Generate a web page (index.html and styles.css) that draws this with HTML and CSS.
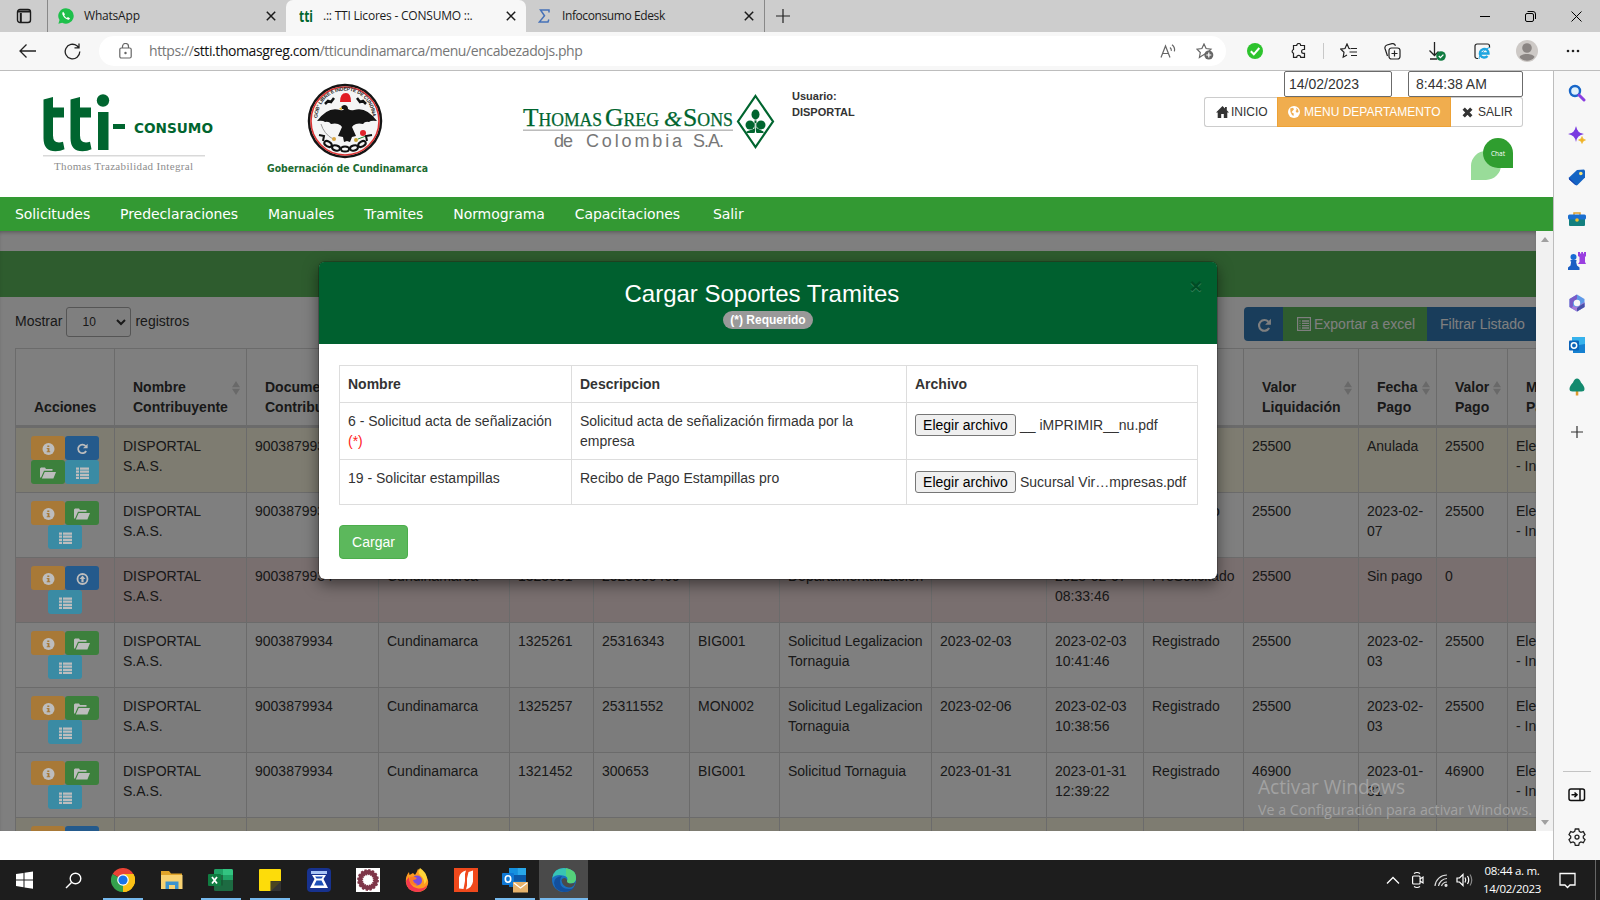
FILE: index.html
```html
<!DOCTYPE html>
<html lang="es">
<head>
<meta charset="utf-8">
<title>.:: TTI Licores - CONSUMO ::.</title>
<link rel="stylesheet" href="styles.css">
</head>
<body>
<svg class="defs" width="0" height="0">
  <symbol id="i-info" viewBox="0 0 12 12"><circle cx="6" cy="6" r="6" fill="#bdbdbd"/><path d="M4.8 2.4h2v1.5h-2zM4.2 4.9h2.7v3.3h.8v1.1H4.2V8.200h.9V5.900h-.9z" fill="#a87937"/></symbol>
  <symbol id="i-reload" viewBox="0 0 14 14"><path d="M11.300 9.300A5 5 0 1 1 10.600 3.500" fill="none" stroke="currentColor" stroke-width="2"/><path d="M13 .8v5.400H7.600z" fill="currentColor"/></symbol>
  <symbol id="i-folder" viewBox="0 0 16 12"><path d="M0 10.500V1.500L1 .5h4L6 2h6.500v1.800H4L1 10.500zM4.700 5H16l-2.600 6.500H1.800z" fill="currentColor"/></symbol>
  <symbol id="i-list" viewBox="0 0 13 12"><path d="M0 .5h3v2.200H0zM4 .5h9v2.200H4zM0 3.600h3v2.200H0zM4 3.600h9v2.200H4zM0 6.700h3v2.200H0zM4 6.700h9v2.200H4zM0 9.800h3V12H0zM4 9.800h9V12H4z" fill="currentColor"/></symbol>
  <symbol id="i-up" viewBox="0 0 12 12"><circle cx="6" cy="6" r="5" fill="none" stroke="currentColor" stroke-width="1.800"/><path d="M6 2.600 9 6H7.100v3.300H4.900V6H3z" fill="currentColor"/></symbol>
  <symbol id="i-sort" viewBox="0 0 8 14"><path d="M4 0l4 6.300H0zM4 14l4-6.300H0z" fill="#d2d2d2"/></symbol>
  <symbol id="i-x" viewBox="0 0 10 10"><path d="M.8.8l8.400 8.400M9.200.8.8 9.200" stroke="#1b1b1b" stroke-width="1.500"/></symbol>
</svg>

<div class="tabbar">
  <span class="tabmenu"><svg width="16" height="16" viewBox="0 0 16 16" fill="none" stroke="#1b1b1b" stroke-width="1.400"><rect x="1.500" y="1.500" width="13" height="13" rx="2.500"/><path d="M2 3.500h12M4.800 5v9" stroke-width="2"/></svg></span>
  <div class="tab tab-first">
    <svg width="16" height="16" viewBox="0 0 16 16"><path d="M8 .3A7.600 7.600 0 0 0 1.500 12L.4 15.700l3.800-1A7.700 7.700 0 1 0 8 .3z" fill="#1ec04b"/><path d="M5.200 3.800c-1 .6-1.200 2-.4 3.500 1 2 2.600 3.600 4.600 4.300 1.300.4 2.300-.2 2.500-1.400l-2-1.200-1 .9C7.600 9.300 6.700 8.300 6.200 7.200L7 6.300z" fill="#fff"/></svg>
    <span class="tab-t t1">WhatsApp</span><svg class="tx" width="10" height="10"><use href="#i-x"/></svg>
  </div>
  <div class="tab tab-active">
    <svg width="15" height="16" viewBox="0 0 15 16"><text x="0" y="14" class="fav" textLength="14" lengthAdjust="spacingAndGlyphs">tti</text></svg>
    <span class="tab-t t2">.:: TTI Licores - CONSUMO ::.</span><svg class="tx" width="10" height="10"><use href="#i-x"/></svg>
  </div>
  <div class="tab tab-last">
    <svg width="12" height="14" viewBox="0 0 12 14"><path d="M11 3.500V1H2.500l4 5.800L1.300 13H10l.8-2.500" fill="none" stroke="#4672b8" stroke-width="1.500"/></svg>
    <span class="tab-t t3">Infoconsumo Edesk</span><svg class="tx" width="10" height="10"><use href="#i-x"/></svg>
  </div>
  <span class="newtab"><svg width="14" height="14" stroke="#222" stroke-width="1.200"><path d="M7 0v14M0 7h14"/></svg></span>
  <div class="winbtns">
    <svg width="10" height="12"><path d="M0 6.500h10" stroke="#000"/></svg>
    <svg width="11" height="11" viewBox="0 0 11 11" fill="none" stroke="#000"><rect x=".5" y="2.500" width="8" height="8" rx="1.500"/><path d="M2.500.5H8A2.500 2.500 0 0 1 10.500 3v5"/></svg>
    <svg width="11" height="11"><path d="M.5.5l10 10M10.500.5l-10 10" stroke="#000"/></svg>
  </div>
</div>

<div class="toolbar">
  <svg class="back" width="17" height="14" viewBox="0 0 17 14" fill="none" stroke="#222" stroke-width="1.300"><path d="M17 7H1M7.500.5 1 7l6.500 6.500"/></svg>
  <svg class="rel" width="17" height="17" viewBox="0 0 17 17" fill="none" stroke="#222" stroke-width="1.300"><path d="M15.800 8.500A7.300 7.300 0 1 1 13 2.800L14.800 4.800M15 .5v4.400h-4.500"/></svg>
  <div class="omni">
    <svg width="13" height="16" viewBox="0 0 13 16" fill="none" stroke="#666" stroke-width="1.200"><rect x=".8" y="5" width="11.400" height="10" rx="1.500"/><path d="M3.500 5V3.500a3 3 0 0 1 6 0V5"/><circle cx="6.500" cy="10" r=".6" fill="#666"/></svg>
    <span class="url">https://<b>stti.thomasgreg.com</b>/tticundinamarca/menu/encabezadojs.php</span>
    <svg class="read" width="17" height="14" viewBox="0 0 17 14" fill="none" stroke="#666" stroke-width="1.200"><path d="M1 13.500 5.500 2 10 13.500M2.700 9.500h5.700M10 3.500c1 .8 1.500 2 1.300 3.300M12 .8c2 1.500 3 4 2.400 6.600"/></svg>
    <svg class="fav-add" width="18" height="17" viewBox="0 0 18 17"><path d="M8 1l2.100 4.500 4.900.7-3.500 3.400L6 12.800 3.400 14.500l.9-5L1 6.200l4.900-.7z" fill="none" stroke="#666" stroke-width="1.200"/><circle cx="12.800" cy="12" r="4.500" fill="#666"/><path d="M12.800 9.500v5M10.300 12h5" stroke="#fff" stroke-width="1.200"/></svg>
  </div>
  <div class="tools">
    <svg width="16" height="16" viewBox="0 0 16 16"><circle cx="8" cy="8" r="8" fill="#2dc32d"/><path d="M3.800 8.300l3 3L12.300 5" fill="none" stroke="#fff" stroke-width="2"/></svg>
    <svg width="16" height="16" viewBox="0 0 16 16"><path d="M2.500 2.500h3.200a2 2 0 0 1 4 0h3.800v4h-1a1.900 1.900 0 0 0 0 3.800h1v4H9.700a2 2 0 0 0-4 0H2.500v-4a2 2 0 0 1 0-3.800z" fill="none" stroke="#222" stroke-width="1.200"/></svg>
    <i class="vsep"></i>
    <svg width="17" height="16" viewBox="0 0 17 16" fill="none" stroke="#222" stroke-width="1.200"><path d="M10.500 5.600 9 5.500 7 1 5 5.500.8 6.100 4 9.300l-.8 4.900L7 12M11 5.500h6M9.500 9h7.500M11 12.500h6"/></svg>
    <svg width="17" height="17" viewBox="0 0 17 17" fill="none" stroke="#222" stroke-width="1.200"><rect x="5" y="5" width="11" height="11" rx="2.500"/><path d="M10.500 7.500v6M7.500 10.500h6M3.500 13 1 5.500A3 3 0 0 1 3 2l5-1.300a3 3 0 0 1 3.500 2"/></svg>
    <svg width="18" height="19" viewBox="0 0 18 19" fill="none" stroke="#222" stroke-width="1.300"><path d="M6.500 0v13M1.500 8.500l5 5 4-4M2 17h7"/><circle cx="13" cy="14" r="4.800" fill="#107c41" stroke="none"/><path d="M10.800 14l1.600 1.600 3-3" stroke="#fff"/></svg>
    <svg width="17" height="17" viewBox="0 0 17 17"><path d="M4 15.500H3A2 2 0 0 1 1 13.500V3a2 2 0 0 1 2-2h10.500a2 2 0 0 1 2 2v2" fill="none" stroke="#222" stroke-width="1.200"/><path d="M6 10.500h8.500A4.300 4.300 0 1 0 13.500 13" fill="none" stroke="#1ea5e0" stroke-width="2.400"/><path d="M5 16C5 12 11 5.500 16 4.500" fill="none" stroke="#1ea5e0"/></svg>
    <svg width="22" height="22" viewBox="0 0 22 22"><circle cx="11" cy="11" r="11" fill="#cdc9c6"/><circle cx="11" cy="8" r="4.800" fill="#8a8583"/><path d="M3.500 17c1.500-4 13.500-4 15 0-3 5-12 5-15 0z" fill="#8a8583"/></svg>
    <svg width="14" height="4" fill="#222"><circle cx="2" cy="2" r="1.300"/><circle cx="7" cy="2" r="1.300"/><circle cx="12" cy="2" r="1.300"/></svg>
  </div>
</div>

<div class="main">
  <div class="page">
    <header class="head">
      <svg class="logo-tti" width="180" height="90" viewBox="0 0 180 90">
        <g fill="#00652f"><path d="M1.500 14.500 11 12v10.500h11v10H11v18q0 7 6 7 2 0 4-.7l1.500 7.500q-4 2-9 2-12 0-12-13zM28.500 14.500 38 12v10.500h11v10H38v18q0 7 6 7 2 0 4-.7l1.500 7.500q-4 2-9 2-12 0-12-13z"/><rect x="56" y="27" width="10.500" height="38"/><circle cx="61" cy="15.500" r="6.200"/><rect x="71" y="39" width="12" height="5"/></g>
        <text x="92" y="47.500" class="consumo" textLength="79" lengthAdjust="spacingAndGlyphs">CONSUMO</text>
        <rect x="1" y="70" width="162" height="1.500" fill="#d9d9d9"/>
        <text x="12" y="84.500" class="thomas" textLength="139">Thomas Trazabilidad Integral</text>
      </svg>
      <svg class="crest" width="164" height="96" viewBox="0 0 164 96">
        <circle cx="79" cy="39" r="36" fill="#f5f5f5" stroke="#151515" stroke-width="2.500"/>
        <circle cx="79" cy="39" r="34" fill="none" stroke="#d33" stroke-width="1.600"/>
        <path id="arc" d="M51.500 36A27.500 27.500 0 0 1 106.500 36" fill="none"/>
        <text class="motto"><textPath href="#arc" textLength="85">GOB° LIBRE E INDEPTE DE CUNDINA</textPath></text>
        <path d="M74 20q0-9 6-9 5 0 5 9z" fill="#e11c24"/>
        <g fill="none" stroke="#111" stroke-width="2.500"><path d="M59 22l3-3 3 1 3-4M100 22l-3-3-3 1-3-4"/></g>
        <path d="M76 27q-2-3 2-4 4 0 4 4 3 2 6 1 12-4 23 11-6-1-8 1-4-1-6 2-4-1-7 0-3 1-4 3l4 9-4 1-2 5-3-1-3 1-1-5-5-1 4-9q-1-2-4-3-3-1-7 0-2-3-6-2-2-2-8-1 11-15 23-11 3 1 4-1z" fill="#141414"/>
        <path d="M75.500 25l-2.500 2 3 1z" fill="#e8b21a"/>
        <path d="M55 42q3 10 12 15" fill="none" stroke="#999"/><circle cx="68" cy="57" r="2" fill="#d9a441"/><circle cx="90" cy="58" r="2" fill="#c9a83a"/><circle cx="97" cy="51" r="3" fill="#e0252c"/><path d="M92 57l8-3" stroke="#2b8a3a"/>
        <g fill="none" stroke="#111" stroke-width="2"><path d="M53 53l5 1-1 5M106 53l-6 1 1 5"/><ellipse cx="62" cy="62" rx="4" ry="2.500" transform="rotate(30 62 62)"/><ellipse cx="70" cy="66" rx="4" ry="2.500" transform="rotate(15 70 66)"/><ellipse cx="79" cy="67" rx="4" ry="2.500"/><ellipse cx="88" cy="66" rx="4" ry="2.500" transform="rotate(-15 88 66)"/><ellipse cx="96" cy="62" rx="4" ry="2.500" transform="rotate(-30 96 62)"/></g>
        <text x="1" y="90" class="gob" textLength="161" lengthAdjust="spacingAndGlyphs">Gobernación de Cundinamarca</text>
      </svg>
      <svg class="logo-tgs" width="256" height="60" viewBox="0 0 256 60">
        <g class="tgs"><text x="1" y="33" textLength="79" lengthAdjust="spacingAndGlyphs"><tspan class="cap">T</tspan>HOMAS</text>
        <text x="83" y="33" textLength="54" lengthAdjust="spacingAndGlyphs"><tspan class="cap">G</tspan>REG</text>
        <text x="142" y="33" class="amp" textLength="18" lengthAdjust="spacingAndGlyphs">&amp;</text>
        <text x="161" y="33" textLength="50" lengthAdjust="spacingAndGlyphs"><tspan class="cap">S</tspan>ONS</text></g>
        <rect x="1" y="36.500" width="210" height="1.400" fill="#b5b5b5"/>
        <g class="dec"><text x="32" y="54" textLength="19">de</text><text x="64" y="54" textLength="96">Colombia</text><text x="171" y="54" textLength="31">S.A.</text></g>
        <path d="M233.500 3 251 28.500 233.500 54 216 28.500z" fill="#fff" stroke="#00652f" stroke-width="2.200"/>
        <g fill="#00652f"><ellipse cx="233.500" cy="21.500" rx="4" ry="5"/><circle cx="228" cy="32" r="4.500"/><circle cx="239" cy="32" r="4.500"/><path d="M232.500 25h2v10l7 3.500v1.500h-7l-1-3-1 3h-8v-1.500l8-3z"/></g>
        <path d="M231 27h5M233.500 30v9" stroke="#fff" stroke-width=".8"/>
      </svg>
      <div class="user">Usuario:<br>DISPORTAL</div>
      <div class="session">
        <div class="inputs"><span class="inp d">14/02/2023</span><span class="inp h">8:44:38 AM</span></div>
        <div class="bgroup">
          <span class="bg b1"><svg width="13" height="12" viewBox="0 0 13 12"><path d="M6.500 0 0 6.500h1.700V12h3.500V8h2.600v4h3.500V6.500H13L10.800 4.300V1H9v1.500z" fill="#333"/></svg>INICIO</span>
          <span class="bg b2"><svg width="12" height="12" viewBox="0 0 12 12"><circle cx="6" cy="6" r="6" fill="#fff"/><path d="M2.200 2.500l2.800-.7 1 1.500L4.500 5 3.500 6.300 5.800 7.500 5.500 10 4 9 2.500 6zM8 1.800l2 1.700.6 2.500-1.800.8L7.500 5l1.200-1z" fill="#f0ad4e"/></svg>MENU DEPARTAMENTO</span>
          <span class="bg b3"><svg width="11" height="11" viewBox="0 0 11 11"><path d="M1.700 1.700l7.600 7.600M9.300 1.700 1.700 9.300" stroke="#333" stroke-width="3.300"/></svg>SALIR</span>
        </div>
        <svg class="chat" width="42" height="42" viewBox="0 0 42 42"><path d="M0 42V27.500A15 15 0 0 1 15 13h15v14A15 15 0 0 1 15 42z" fill="#99dc99"/><path d="M42 30V15A15 15 0 1 0 27 30z" fill="#2f9e2f"/><text x="27" y="17.500" class="chat-t" text-anchor="middle">Chat</text></svg>
      </div>
    </header>
    <nav class="nav"><a>Solicitudes</a><a>Predeclaraciones</a><a>Manuales</a><a>Tramites</a><a>Normograma</a><a>Capacitaciones</a><a>Salir</a></nav>

    <div class="frame">
      <div class="view">
        <div class="band"></div>
        <div class="controls">
          <div class="len">Mostrar <span class="sel">10<svg width="10" height="7" viewBox="0 0 10 7"><path d="M1 1l4 4 4-4" fill="none" stroke="#333" stroke-width="2"/></svg></span> registros</div>
          <div class="acts"><span class="ab ab1"><svg width="15" height="15"><use href="#i-reload"/></svg></span><span class="ab ab2"><svg width="14" height="14" viewBox="0 0 14 14" fill="none" stroke="#fff"><rect x=".6" y=".6" width="12.800" height="12.800" stroke-width="1.200"/><path d="M2.500 4h1M5 4h7M2.500 6.300h1M5 6.300h7M2.500 8.600h1M5 8.600h7M2.500 11h1M5 11h7" stroke-width="1.300"/></svg>Exportar a excel</span><span class="ab ab3">Filtrar Listado</span></div>
        </div>
        <table class="grid">
          <colgroup><col class="c1"><col class="c2"><col class="c3"><col class="c4"><col class="c5"><col class="c6"><col class="c7"><col class="c8"><col class="c9"><col class="c10"><col class="c11"><col class="c12"><col class="c13"><col class="c14"><col class="c15"></colgroup>
          <thead><tr>
            <th>Acciones</th><th>Nombre<br>Contribuyente<svg class="so"><use href="#i-sort"/></svg></th><th>Documento<br>Contribuyente</th><th></th><th></th><th></th><th></th><th></th><th></th><th></th><th></th>
            <th>Valor<br>Liquidación<svg class="so"><use href="#i-sort"/></svg></th><th>Fecha<br>Pago<svg class="so"><use href="#i-sort"/></svg></th><th>Valor<br>Pago<svg class="so"><use href="#i-sort"/></svg></th><th>Medio<br>Pago</th>
          </tr></thead>
          <tbody>
          <tr class="warn"><td><div class="btns"><i class="o"><svg><use href="#i-info"/></svg></i><i class="b"><svg><use href="#i-reload"/></svg></i><i class="g"><svg><use href="#i-folder"/></svg></i><i class="c"><svg><use href="#i-list"/></svg></i></div></td><td>DISPORTAL S.A.S.</td><td>9003879934</td><td></td><td></td><td></td><td></td><td></td><td></td><td></td><td></td><td>25500</td><td>Anulada</td><td>25500</td><td>Electronico<br>- Internet</td></tr>
          <tr><td><div class="btns"><i class="o"><svg><use href="#i-info"/></svg></i><i class="g"><svg><use href="#i-folder"/></svg></i><i class="c"><svg><use href="#i-list"/></svg></i></div></td><td>DISPORTAL S.A.S.</td><td>9003879934</td><td></td><td></td><td></td><td></td><td></td><td></td><td></td><td class="pend">Registrado</td><td>25500</td><td>2023-02-07</td><td>25500</td><td>Electronico<br>- Internet</td></tr>
          <tr class="dang"><td><div class="btns"><i class="o"><svg><use href="#i-info"/></svg></i><i class="b"><svg><use href="#i-up"/></svg></i><i class="c"><svg><use href="#i-list"/></svg></i></div></td><td>DISPORTAL S.A.S.</td><td>9003879934</td><td>Cundinamarca</td><td>1325351</td><td>2023000469</td><td></td><td>Departamentalizacion</td><td></td><td>2023-02-07 08:33:46</td><td>PreSolicitado</td><td>25500</td><td>Sin pago</td><td>0</td><td></td></tr>
          <tr><td><div class="btns"><i class="o"><svg><use href="#i-info"/></svg></i><i class="g"><svg><use href="#i-folder"/></svg></i><i class="c"><svg><use href="#i-list"/></svg></i></div></td><td>DISPORTAL S.A.S.</td><td>9003879934</td><td>Cundinamarca</td><td>1325261</td><td>25316343</td><td>BIG001</td><td>Solicitud Legalizacion Tornaguia</td><td>2023-02-03</td><td>2023-02-03 10:41:46</td><td>Registrado</td><td>25500</td><td>2023-02-03</td><td>25500</td><td>Electronico<br>- Internet</td></tr>
          <tr class="odd"><td><div class="btns"><i class="o"><svg><use href="#i-info"/></svg></i><i class="g"><svg><use href="#i-folder"/></svg></i><i class="c"><svg><use href="#i-list"/></svg></i></div></td><td>DISPORTAL S.A.S.</td><td>9003879934</td><td>Cundinamarca</td><td>1325257</td><td>25311552</td><td>MON002</td><td>Solicitud Legalizacion Tornaguia</td><td>2023-02-06</td><td>2023-02-03 10:38:56</td><td>Registrado</td><td>25500</td><td>2023-02-03</td><td>25500</td><td>Electronico<br>- Internet</td></tr>
          <tr><td><div class="btns"><i class="o"><svg><use href="#i-info"/></svg></i><i class="g"><svg><use href="#i-folder"/></svg></i><i class="c"><svg><use href="#i-list"/></svg></i></div></td><td>DISPORTAL S.A.S.</td><td>9003879934</td><td>Cundinamarca</td><td>1321452</td><td>300653</td><td>BIG001</td><td>Solicitud Tornaguia</td><td>2023-01-31</td><td>2023-01-31 12:39:22</td><td>Registrado</td><td>46900</td><td>2023-01-31</td><td>46900</td><td>Electronico<br>- Internet</td></tr>
          <tr class="warn"><td><div class="btns"><i class="o"></i><i class="b"></i></div></td><td></td><td></td><td></td><td></td><td></td><td></td><td></td><td></td><td></td><td></td><td></td><td></td><td></td><td></td></tr>
          </tbody>
        </table>
        <div class="backdrop"></div>
        <div class="watermark"><svg width="290" height="48"><text x="2" y="19" class="w1" textLength="147" lengthAdjust="spacingAndGlyphs">Activar Windows</text><text x="2" y="40" class="w2" textLength="274" lengthAdjust="spacingAndGlyphs">Ve a Configuración para activar Windows.</text></svg></div>
        <div class="modal">
          <div class="mhead"><span class="close">×</span><h4>Cargar Soportes Tramites</h4><span class="badge">(*) Requerido</span></div>
          <div class="mbody">
            <table class="mt">
              <colgroup><col class="m1"><col class="m2"><col class="m3"></colgroup>
              <tr><th>Nombre</th><th>Descripcion</th><th>Archivo</th></tr>
              <tr><td>6 - Solicitud acta de señalización <span class="req">(*)</span></td><td>Solicitud acta de señalización firmada por la empresa</td><td><div class="file"><button>Elegir archivo</button><span>__ iMPRIMIR__nu.pdf</span></div></td></tr>
              <tr><td>19 - Solicitar estampillas</td><td>Recibo de Pago Estampillas pro</td><td><div class="file"><button>Elegir archivo</button><span>Sucursal Vir…mpresas.pdf</span></div></td></tr>
            </table>
            <span class="cargar">Cargar</span>
          </div>
        </div>
      </div>
      <div class="scroll"><svg width="8" height="5"><path d="M0 5 4 0l4 5z" fill="#a0a0a0"/></svg><svg width="8" height="5"><path d="M0 0l4 5 4-5z" fill="#a0a0a0"/></svg></div>
    </div>
  </div>

  <aside class="side">
    <svg viewBox="0 0 18 18"><circle cx="7" cy="7" r="5" fill="#dff1fb" stroke="#1766c9" stroke-width="2.400"/><path d="M11 11l5 5" stroke="#8a3fe0" stroke-width="3" stroke-linecap="round"/></svg>
    <svg viewBox="0 0 18 18"><path d="M8 0q1 7 8 8-7 1-8 8-1-7-8-8 7-1 8-8z" fill="#7a3be0"/><path d="M8 1q.6 6.400 7 7l-7 .5L1 8q6.400-.6 7-7z" fill="#7a3be0"/><path d="M14 10.500q.5 3 3.500 3.500-3 .5-3.500 3.500-.5-3-3.500-3.500 3-.5 3.500-3.500z" fill="#f0b323" stroke="#f0b323" stroke-width=".6"/></svg>
    <svg viewBox="0 0 18 18"><path d="M1 9.500 9 2l7-.5 1 1v7L9.500 17q-1 .8-2 0L1.200 11.500q-.8-1-.2-2z" fill="#1464c4"/><path d="M1 9.500 8 16.800q-.3.300-1 0L1.200 11.500z" fill="#1a3fae"/><circle cx="12.800" cy="5.500" r="1.800" fill="#f6e27a"/></svg>
    <svg viewBox="0 0 18 18"><path d="M6 5V3h6v2" fill="none" stroke="#e0a02c" stroke-width="1.500"/><rect x="1" y="8" width="16" height="8" rx="1" fill="#13807f"/><rect x="0" y="4.500" width="18" height="5" rx="1.500" fill="#1b6fd0"/><circle cx="9" cy="10" r="1.800" fill="#f2c230"/></svg>
    <svg viewBox="0 0 18 18"><path d="M10 0h2v1.500h1.200V0h1.800v1.500h1V0h2v4l-1 1v5l1 2h-8l1.500-2V5L10 4z" fill="#9a3fe0"/><circle cx="5.500" cy="5" r="3" fill="#1a6bd4"/><path d="M2.500 8h6v1.500H8l1 4 2.500 2V18H0v-2.500l2.500-2 .7-4h-.7z" fill="#1a5fc4"/></svg>
    <svg viewBox="0 0 18 18"><path d="M9 .5 16.500 5v8L9 17.500 1.500 13V5z" fill="#5f9ae8"/><path d="M9 .5 1.500 5v8L5 15V8l4-3z" fill="#7a5bc8"/><path d="M16.500 8v5L9 17.500 3.500 14.300 5 12l4 1z" fill="#a77bd8"/><path d="M16.500 9v4L9 17.500V14l4-3z" fill="#4651a8"/><circle cx="9" cy="9" r="3.200" fill="#f7f7f7"/></svg>
    <svg viewBox="0 0 18 18"><rect x="4" y="1" width="13" height="13" fill="#36b2ec"/><path d="M5 10l12-2v9H5z" fill="#1580d0"/><rect x="1" y="4.500" width="10" height="10" rx="1" fill="#0b62b8"/><circle cx="6" cy="9.500" r="2.700" fill="none" stroke="#fff" stroke-width="1.500"/></svg>
    <svg viewBox="0 0 18 18"><rect x="7.800" y="11" width="2.500" height="6.500" fill="#e09a2c"/><path d="M9 .5q2.500 0 4 4 3.500 3.500 3.500 6.500 0 2.500-3 2.500h-9q-3 0-3-2.500 0-3 3.500-6.500 1.500-4 4-4z" fill="#138a6e"/></svg>
    <svg class="pl" viewBox="0 0 18 18"><path d="M9 3v12M3 9h12" stroke="#333" stroke-width="1.200"/></svg>
    <i class="fill"></i><i class="hr"></i>
    <svg class="s10" viewBox="0 0 18 18" fill="none" stroke="#111" stroke-width="1.500"><rect x="1" y="3" width="15.500" height="11.500" rx="2"/><path d="M12 3v11.500M3.500 8.800h5M6.500 6.500 9 8.800l-2.500 2.300"/></svg>
    <svg class="s11" viewBox="0 0 18 18" fill="none" stroke="#222" stroke-width="1.300"><path d="M7.300 1h3.400l.6 2.400 1.600.9 2.400-.7 1.700 3L15.300 8.300v1.700l1.700 1.700-1.700 3-2.400-.7-1.600.9-.6 2.400H7.300l-.6-2.400-1.600-.9-2.400.7-1.700-3 1.700-1.700V8.300L1 6.600l1.700-3 2.400.7 1.600-.9z"/><circle cx="9" cy="9.100" r="2"/></svg>
  </aside>
</div>

<footer class="task">
  <span class="ti"><svg width="17" height="18" viewBox="0 0 17 18" fill="#fff"><path d="M0 3l7.500-1v6.600H0zM8.500 1.800 17 .5v8.100H8.500zM0 9.600h7.500v6.600L0 15zM8.500 9.600H17v8.100l-8.500-1.200z"/></svg></span>
  <span class="ti"><svg width="17" height="17" viewBox="0 0 17 17" fill="none" stroke="#fff" stroke-width="1.400"><circle cx="10.500" cy="6.500" r="5.300"/><path d="M6.500 10.500 1 16"/></svg></span>
  <span class="ti run"><svg width="24" height="24" viewBox="0 0 24 24"><path d="M12 12 1.600 6A12 12 0 0 1 22.400 6z" fill="#ea4335"/><path d="M12 12 22.400 6A12 12 0 0 1 12 24z" fill="#fbc116"/><path d="M12 12v12A12 12 0 0 1 1.600 6z" fill="#34a14c"/><path d="M12 6h10.400A12 12 0 0 1 12 24l5.200-9z" fill="#fbc116"/><circle cx="12" cy="12" r="5.800" fill="#fff"/><circle cx="12" cy="12" r="4.600" fill="#1a73e8"/></svg></span>
  <span class="ti"><svg width="22" height="18" viewBox="0 0 22 18"><path d="M0 0h8l2 2.500h11V17H0z" fill="#e0a42a"/><path d="M0 4h21.500v14H0z" fill="#f8d272"/><path d="M4.500 18v-7.500h13V18H14v-4H8v4z" fill="#3c94cf"/></svg></span>
  <span class="ti run"><svg width="25" height="22" viewBox="0 0 25 22"><rect x="6" width="19" height="22" rx="1.500" fill="#1d6b42"/><path d="M6 1.500Q6 0 7.500 0H15v6H6z" fill="#21a366"/><path d="M15 0h8.500Q25 0 25 1.500V6H15z" fill="#33c481"/><path d="M6 11h9v5.500H6z" fill="#185c37"/><path d="M15 6h10v5H15z" fill="#21a366"/><rect y="5" width="13" height="12" rx="1" fill="#107c41"/><path d="M4 8l5 6.500M9 8l-5 6.500" stroke="#fff" stroke-width="1.800"/></svg></span>
  <span class="ti run"><svg width="22" height="22" viewBox="0 0 22 22"><path d="M1 0h20q1 0 1 1v11l-10 10H1q-1 0-1-1V1q0-1 1-1z" fill="#fddc0a"/><path d="M11.500 12H22v9q0 1-1 1h-9.500z" fill="#333"/><path d="M12 22v-9.500h10z" fill="#4b4520"/></svg></span>
  <span class="ti"><svg width="24" height="24" viewBox="0 0 24 24"><rect width="24" height="24" rx="4" fill="#17328f"/><path d="M4 3h16v3H4z" fill="#a9c5f5"/><path d="M5 7h14l-2.500 4L21 20H3l4.500-9z" fill="#fff"/><path d="M8 8.500h8l-1.500 2h-5zM9.500 12.500h5L17 17.500H7z" fill="#1c50b8"/></svg></span>
  <span class="ti"><svg width="24" height="24" viewBox="0 0 24 24"><rect width="24" height="24" fill="#fff"/><circle cx="12" cy="12" r="7.900" fill="none" stroke="#7e3548" stroke-width="6" stroke-dasharray="1.800 1.300"/><circle cx="12" cy="12" r="7.900" fill="none" stroke="#7e3548" stroke-width="4.200"/></svg></span>
  <span class="ti"><svg width="24" height="24" viewBox="0 0 24 24"><path d="M13 1q4 2 5.500 6l1.500-1q4 6 3 10-2 8-11 8Q2 23 .8 14 .5 8 4 4l.5 3L8 5l2 2q2-3 3-6z" fill="#ff9a1f"/><path d="M15 0q-3 4 0 7 5 4 4 9 3-2 3-6-1-6-7-10z" fill="#ffd43a"/><path d="M1 13q0 10 11 11 8 0 10.500-7-5 5-11 3Q4 18 4 9z" fill="#f4384f"/><circle cx="12" cy="12.500" r="5" fill="#7a4be0"/><path d="M5 9q4-1 7 1-1 2-4 2 1 4 5 4-5 3-8-2z" fill="#ff7a26"/></svg></span>
  <span class="ti"><svg width="24" height="24" viewBox="0 0 24 24"><rect width="24" height="24" fill="#f0491c"/><path d="M5 9.500Q6 4 12 2.500L11 6v7l-1.500 8L5 20.500zM19 13.500q-1 6-7 8l1-4v-7L14.500 4 19 2.500z" fill="#fff"/></svg></span>
  <span class="ti run"><svg width="26" height="26" viewBox="0 0 26 26"><path d="M7 1h17v19H7z" fill="#0f6cbd"/><path d="M7 1h8.500v7H7z" fill="#1490df"/><path d="M15.500 1H24v7h-8.500z" fill="#28a8ea"/><path d="M7 8h17v6H7z" fill="#0a58a8"/><rect y="6" width="12" height="12" rx="1" fill="#0f78d4"/><ellipse cx="6" cy="12" rx="2.700" ry="3.200" fill="none" stroke="#fff" stroke-width="1.600"/><rect x="11" y="15" width="15" height="10.500" fill="#e8b36c"/><path d="M12 16l6.500 5 6.500-5" fill="none" stroke="#fff" stroke-width="1.300"/></svg></span>
  <span class="ti run cur"><svg width="24" height="24" viewBox="0 0 24 24"><circle cx="12" cy="12" r="12" fill="#1b6fc0"/><path d="M.3 10Q2 0 12 0q12 1 12 10 0 5-5.500 5.500-4 0-3.500-2 2-5-4-6Q4 6 .3 10z" fill="#38c4b4"/><path d="M14 0q10 2 10 10 0 5-5.500 5.500-4 0-3.500-2 2-4-1-5.500z" fill="#55d27a"/><path d="M8 13q0 8 9 8 3 0 5-1-4 4-10 4Q3 23 2 15q0-6 8-7-2 2-2 5z" fill="#134f9c"/><path d="M9.500 12q1-2 3-2 3 1 2.500 3.500.5 2 4.500 2 2 0 3.500-1-1 5-6 5-7-1-7.500-7.500z" fill="#4a4a4a"/></svg></span>
  <div class="tray">
    <svg class="y1" width="14" height="8" viewBox="0 0 14 8"><path d="M1 7.500 7 1.500l6 6" fill="none" stroke="#fff" stroke-width="1.300"/></svg>
    <svg class="y2" width="14" height="18" viewBox="0 0 14 18" fill="none" stroke="#fff" stroke-width="1.200"><rect x="1.600" y="5" width="7.500" height="8" rx="1"/><path d="M9 8l3-2v6l-3-2M3 2.500Q6 .5 9 2.500M3 15.500q3 2 6 0"/></svg>
    <svg class="y3" width="14" height="14" viewBox="0 0 14 14" fill="none" stroke="#ddd" stroke-width="1.200"><path d="M1 13A12 12 0 0 1 13 2M4.500 13A9 9 0 0 1 13 5.500M7.500 13A6 6 0 0 1 13 9"/><circle cx="12" cy="12.300" r="1" fill="#fff"/></svg>
    <svg class="y4" width="17" height="14" viewBox="0 0 17 14" fill="none" stroke="#fff" stroke-width="1.200"><path d="M1 5h2.500L7 1.500v11L3.500 9H1zM9 4.500q1.500 2.500 0 5M11.500 3q2.500 4 0 8"/><path d="M14 1.500q3.500 5.500 0 11" stroke="#888"/></svg>
    <div class="clock">08:44 a. m.<br>14/02/2023</div>
    <svg class="y5" width="17" height="17" viewBox="0 0 17 17"><path d="M1 1.500h15v11.500h-5L8.500 15.500 6 13H1z" fill="none" stroke="#fff" stroke-width="1.300"/></svg>
    <i class="desk"></i>
  </div>
</footer>
</body>
</html>
```
FILE: styles.css
```css
*{box-sizing:border-box}
body{margin:0;width:1600px;height:900px;overflow:hidden;background:#fff;font-family:"Liberation Sans",Arial,sans-serif;font-size:14px;line-height:20px;color:#333;display:flex;flex-direction:column}
svg{display:block;flex:none}
.defs{position:absolute}

/* browser chrome */
.tabbar{height:32px;flex:none;background:#cdcdcd;display:flex;align-items:stretch;font:12px/32px "Open Sans","Noto Sans",sans-serif;color:#1b1b1b}
.tabmenu{width:48px;padding:8px 0 0 16px;border-right:1px solid #888}
.tab{display:flex;align-items:center;white-space:nowrap}
.tab-first{width:238px;padding-left:10px}
.tab-active{width:240px;padding-left:13px;background:#f7f7f7;border-radius:7px 7px 0 0}
.tab-last{width:239px;padding-left:12px;border-right:1px solid #888}
.tab-t{flex:1}
.t1{padding-left:10px;letter-spacing:-.2px}
.t2{padding-left:9px;letter-spacing:-.22px}
.t3{padding-left:12px;letter-spacing:-.4px}
.tx{margin-right:10px}
.fav{font:bold 16px "Open Sans",sans-serif;fill:#00652f}
.newtab{padding:9px 0 0 11px}
.winbtns{margin-left:auto;display:flex;gap:35px;align-items:center;padding-right:18px}
.toolbar{height:39px;flex:none;background:#f7f7f7;border-bottom:1px solid #bdbdbd;display:flex;align-items:center}
.back{margin-left:19px}
.rel{margin-left:28px}
.omni{margin-left:18px;width:1127px;height:30px;background:#fff;border-radius:15px;display:flex;align-items:center;padding-left:20px}
.url{margin-left:17px;flex:1;font:14px/30px "Open Sans","Noto Sans",sans-serif;letter-spacing:-.41px;color:#767676;white-space:nowrap}
.url b{font-weight:normal;color:#111}
.read{margin-right:19px}
.fav-add{margin-right:12px}
.tools{flex:1;display:grid;grid-template-columns:44px 44px 5px 44px 44px 46px 44px 46px 46px;align-items:center;justify-items:center;padding-left:7px}
.vsep{width:1px;height:16px;background:#c8c8c8}

.main{height:789px;flex:none;display:flex}
.page{width:1554px;border-right:1px solid #bdbdbd;display:flex;flex-direction:column}
.side{flex:1;background:#f7f7f7;display:flex;flex-direction:column;align-items:center;padding-top:13px;gap:24px}
.side svg{width:18px;height:18px}
.side .pl{margin-top:3px}
.side .fill{flex:1;margin-bottom:-48px}
.side .hr{width:28px;height:1px;background:#c4c4c4;margin-bottom:-10px}
.side .s11{margin-bottom:14px}

/* application header */
.head{height:126px;flex:none;display:flex;align-items:flex-start}
.logo-tti{margin:14px 0 0 42px}
.consumo{font:bold 14px "DejaVu Sans",Verdana,sans-serif;fill:#00652f}
.thomas{font:11px "Liberation Serif",serif;fill:#8c8c8c}
.crest{margin:11px 0 0 44px}
.motto{font:bold 5px "Liberation Sans",sans-serif;fill:#222}
.gob{font:bold 10.500px "DejaVu Sans",Verdana,sans-serif;fill:#1c6b31}
.logo-tgs{margin:22px 0 0 92px}
.tgs{font:18px "Liberation Serif",serif;fill:#00652f;stroke:#00652f;stroke-width:.25px}
.tgs .cap{font-size:26px}
.tgs .amp{font-style:italic;font-size:21px}
.dec{font:18px "Liberation Sans Narrow","Liberation Sans",sans-serif;fill:#777}
.user{margin:17px 0 0 14px;font:bold 11px/16px "Liberation Sans",sans-serif;width:100px}
.session{margin-left:auto;padding-right:30px;display:flex;flex-direction:column;align-items:flex-end}
.inputs{display:flex;gap:16px}
.inp{height:26px;border:1px solid #6b6b6b;border-radius:2px;line-height:24px;white-space:nowrap}
.d{width:108px;padding-left:4px}
.h{width:115px;padding-left:7px}
.bgroup{display:flex;height:30px;font-size:12px;line-height:28px;white-space:nowrap}
.bg{display:flex;align-items:center;border:1px solid #ccc}
.b1{width:73px;padding-left:11px;gap:2px;border-radius:3px 0 0 3px;border-right:0}
.b2{width:174px;padding-left:10px;gap:4px;background:#f0ad4e;border-color:#eea236;color:#fff}
.b3{width:72px;padding-left:11px;gap:5px;border-radius:0 3px 3px 0;border-left:0}
.chat{margin:11px 10px 0 0}
.chat-t{font:6.500px "Open Sans",sans-serif;fill:#fff}
.nav{height:34px;flex:none;background:#393;color:#fff;display:flex;gap:30px;padding-left:15px;font:14px/34px "DejaVu Sans",Verdana,sans-serif;letter-spacing:-.08px;white-space:nowrap}
.nav a:last-child{margin-left:3px}

/* embedded listing */
.frame{height:600px;flex:none;display:flex}
.view{width:1536px;height:600px;position:relative;overflow:hidden}
.scroll{width:17px;background:#f1f1f1;display:flex;flex-direction:column;justify-content:space-between;align-items:center;padding:6px 0}
.band{margin-top:20px;height:46px;background:#5cb85c}
.controls{height:51px;padding:10px 0 0 15px;display:flex;justify-content:space-between}
.len{display:flex;height:30px;line-height:28px}
.sel{width:65px;height:30px;margin:0 4px 0 4px;border:1px solid #aaa;border-radius:3px;display:flex;align-items:center;justify-content:space-between;padding:0 4px 0 15px;font-size:12px}
.acts{display:flex;height:34px;width:292px;color:#fff;overflow:hidden;border-radius:4px 0 0 4px;white-space:nowrap;line-height:34px}
.ab{flex:none;display:flex;align-items:center;height:34px}
.ab1{width:39px;padding:2px 0 0 13px;background:#337ab7}
.ab2{width:144px;padding-left:14px;gap:3px;background:#5cb85c}
.ab3{width:120px;padding-left:13px;background:#337ab7}
.grid{margin-left:15px;width:1592px;border-collapse:collapse;table-layout:fixed}
.c1{width:99px}.c2,.c3{width:132px}.c4{width:131px}.c5{width:84px}.c6{width:96px}.c7{width:90px}.c8{width:152px}.c9{width:115px}.c10{width:97px}.c11{width:100px}.c12{width:115px}.c13{width:78px}.c14{width:71px}.c15{width:100px}
.grid th,.grid td{border:1px solid #d6d6d6}
.grid th{height:78px;padding:8px 0 8px 18px;text-align:left;vertical-align:bottom;border-bottom:3px solid #d6d6d6;position:relative;white-space:nowrap}
.so{position:absolute;right:6px;top:32px;width:8px;height:14px}
.grid td{height:65px;padding:8px 4px 8px 8px;vertical-align:top}
.grid td:nth-child(2){padding-right:20px}
.grid td:first-child{padding:8px 0}
.grid .warn{background:#fcf8e3}
.grid .dang{background:#f2dede}
.grid .odd{background:#f9f9f9}
.btns{width:68px;margin:0 auto;height:48px;display:flex;flex-wrap:wrap;justify-content:center;color:#bdbdbd;position:relative;z-index:3}
.btns i{width:34px;height:24px;border-radius:3px;display:flex;align-items:center;justify-content:center;padding-top:2px}
.btns svg{width:13px;height:12px}
.btns .g svg{width:16px}
.btns .o{background:#a87937}.btns .b{background:#245a8c}.btns .g{background:#3c803c}.btns .c{background:#3a8ba4}
.backdrop{position:absolute;inset:0;background:rgba(0,0,0,.5);box-shadow:inset 0 3px 4px -2px rgba(0,0,0,.35);z-index:2}
.watermark{position:absolute;left:1256px;top:544px;z-index:4}
.w1{font:20px "Open Sans",sans-serif;fill:#a2a2a2}
.w2{font:15px "Open Sans",sans-serif;fill:#a2a2a2}

.modal{position:absolute;z-index:5;left:319px;top:31px;width:898px;height:317px;border-radius:6px;background:#fff;box-shadow:0 5px 15px rgba(0,0,0,.5),0 0 0 1px rgba(0,0,0,.2)}
.mhead{height:82px;background:#00602f;border-radius:5px 5px 0 0;text-align:center;color:#fff;padding:18px 15px 0}
.mhead h4{margin:0;font-size:24px;font-weight:500;line-height:27px}
.close{float:right;font:bold 21px/21px "Liberation Sans",sans-serif;color:#000;text-shadow:0 1px 0 #fff;opacity:.2;margin-top:-5px}
.badge{display:block;width:90px;height:18px;margin:4px auto 0;border-radius:10px;background:#999;font-weight:bold;font-size:12px;line-height:18px}
.mbody{padding:21px 20px}
.mt{width:858px;border-collapse:collapse;table-layout:fixed}
.m1{width:232px}.m2{width:335px}.m3{width:291px}
.mt th,.mt td{border:1px solid #ddd;padding:8px 0 8px 8px;text-align:left;vertical-align:top}
.mt tr{height:37px}
.mt tr:nth-child(2){height:57px}
.mt tr:nth-child(3){height:45px}
.req{color:#f22;display:block}
.file{display:flex;align-items:center;margin-top:3px;height:22px;white-space:nowrap;gap:4px}
.file button{width:101px;height:22px;padding:0;border:1px solid #767676;border-radius:3px;background:#efefef;font:14px/18px "Liberation Sans",sans-serif;color:#000}
.cargar{display:block;margin-top:20px;width:69px;height:34px;border:1px solid #4cae4c;border-radius:4px;background:#5cb85c;color:#fff;text-align:center;line-height:32px}

/* taskbar */
.task{height:40px;flex:none;background:#1d1d1d;display:flex}
.ti{width:49px;height:40px;display:flex;align-items:center;justify-content:center}
.run{background:linear-gradient(#76b9ed,#76b9ed) 50% 100%/40px 2px no-repeat}
.cur{background:linear-gradient(#76b9ed,#76b9ed) 50% 100%/48px 2px no-repeat #4a4a4a}
.tray{margin-left:auto;display:flex;align-items:center;color:#fff}
.y2{margin-left:11px}.y3{margin-left:9px}.y4{margin-left:8px}
.clock{width:58px;margin-left:10px;text-align:center;font:11.500px/18px "Open Sans","Noto Sans",sans-serif;letter-spacing:-.3px;white-space:nowrap}
.y5{margin-left:18px}
.desk{width:1px;height:40px;background:#666;margin:0 4px 0 19px}
```
